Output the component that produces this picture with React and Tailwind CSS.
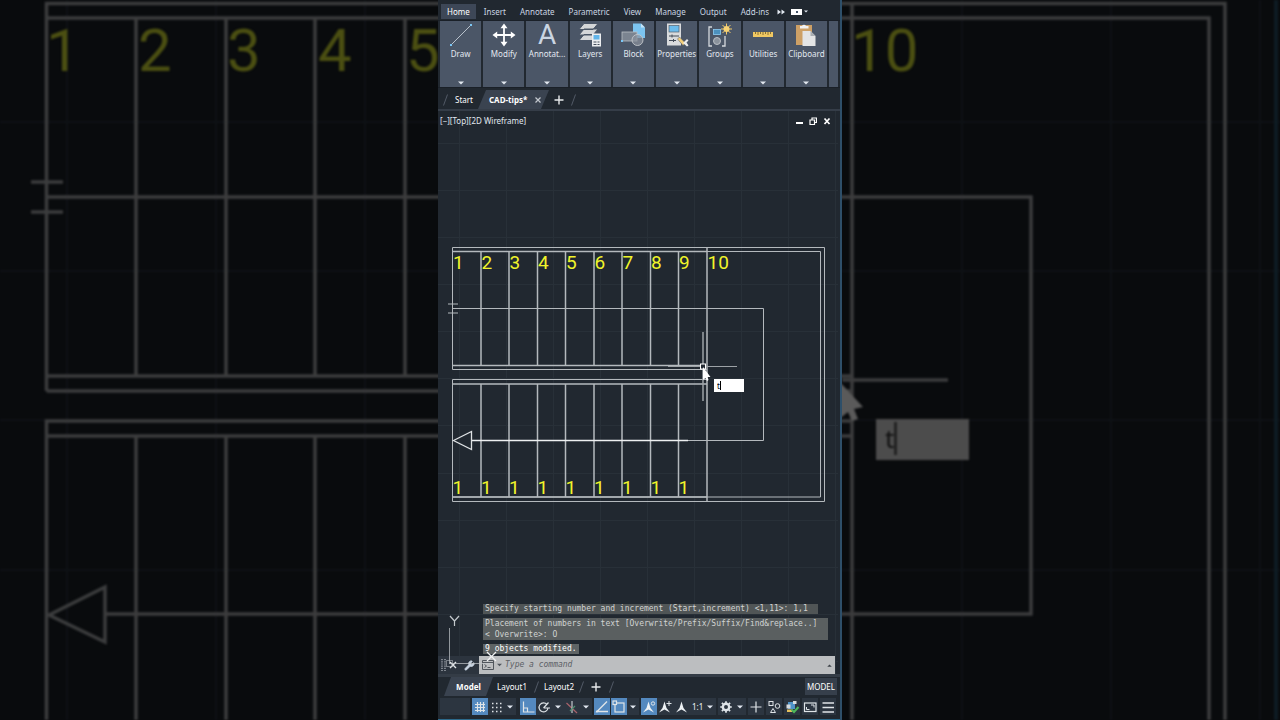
import { useState } from "react";
import { Wrench } from "lucide-react";

const menuTabs = ["Home", "Insert", "Annotate", "Parametric", "View", "Manage", "Output", "Add-ins"];
const steps = [1, 2, 3, 4, 5, 6, 7, 8, 9, 10];
const stepX = [452.5, 481, 509, 537.5, 565.5, 594, 622, 650.5, 678.5, 707];
const gridX = [459, 506, 553, 600, 647, 694, 741, 788, 835];
const gridY = [143, 190, 237, 284, 331, 378, 425, 473, 520, 567, 614, 661];

const Caret = () => (
  <svg viewBox="0 0 6 4" className="h-1 w-1.5 fill-slate-200">
    <path d="M0 0.5h6L3 3.5z" />
  </svg>
);

const DrawIcon = () => (
  <svg viewBox="0 0 24 24" className="h-6 w-6">
    <path d="M2 22 22 2" stroke="#b9c2cc" strokeWidth="1" />
    <rect x="1" y="21" width="2" height="2" fill="#7cc7f5" />
    <rect x="21" y="1" width="2" height="2" fill="#7cc7f5" />
  </svg>
);

const ModifyIcon = () => (
  <svg viewBox="0 0 24 24" className="h-6 w-6">
    <path d="M12 3v18M3 12h18" stroke="#fff" strokeWidth="1.8" />
    <path d="M12 0.5 15.5 5.2H8.500zM12 23.500 15.500 18.800H8.500zM0.500 12 5.200 8.500v7zM23.500 12 18.800 8.500v7z" fill="#fff" />
  </svg>
);

const AnnotateIcon = () => (
  <span className="flex h-6 w-6 items-center justify-center font-['Roboto',sans-serif] text-[28px] leading-6 text-slate-300">A</span>
);

const LayersIcon = () => (
  <svg viewBox="0 0 24 24" className="h-6 w-6">
    <path d="M6 0.5h14l-5 6H1zM6 6h14l-5 6H1zM6 11.500h14l-5 6H1z" fill="#d4d6d8" stroke="#4b5667" strokeWidth="1" />
    <rect x="14" y="10.500" width="9" height="13" fill="#eceef0" />
    <rect x="15.500" y="12" width="6" height="4.500" fill="#62b5ea" />
    <path d="M15.500 19h6M15.500 21.500h6" stroke="#46505e" strokeWidth="1" strokeDasharray="3 1" />
  </svg>
);

const BlockIcon = () => (
  <svg viewBox="0 0 24 24" className="h-6 w-6">
    <path d="M12 0.500h8l4 4V15H12z" fill="#7cc4f0" />
    <path d="M20 0.500v4h4z" fill="#c5e4f8" />
    <rect x="1" y="9" width="15" height="9" fill="#7b8490" stroke="#b9bec4" strokeWidth="0.800" />
    <circle cx="16.500" cy="17" r="5.500" fill="#8a929c" fillOpacity="0.700" stroke="#c2c6cb" strokeWidth="0.900" />
    <rect x="0" y="17" width="2" height="2" fill="#7cc7f5" />
  </svg>
);

const PropertiesIcon = () => (
  <svg viewBox="0 0 24 24" className="h-6 w-6">
    <rect x="2" y="0.500" width="14" height="22" fill="#d9dbdd" />
    <rect x="4" y="2.500" width="10" height="6.500" fill="#6cbcec" stroke="#55616f" strokeWidth="0.700" />
    <path d="M4 13h10M4 17.500h7M7 11.500v3M8.500 16v3" stroke="#434c59" strokeWidth="1" />
    <path d="m12.500 16 2-2 6 6-2.500 2.500z" fill="#f3cf7a" stroke="#4b5667" strokeWidth="0.500" />
    <path d="m18 20 4-4 1.500 1.500-2 2 2 3-1.500 1z" fill="#ececec" />
  </svg>
);

const GroupsIcon = () => (
  <svg viewBox="0 0 24 24" className="h-6 w-6" fill="none">
    <path d="M4 4H1v19h3M14 23h3V13" stroke="#d5d9dd" strokeWidth="1.300" />
    <rect x="5.500" y="6.500" width="7" height="5" fill="#4b90bd" stroke="#8ecdf2" strokeWidth="0.800" />
    <circle cx="9" cy="18" r="3.500" fill="#8a929c" stroke="#b9bec4" />
    <path d="M18.500 0.500v11M13 6h11M14.500 2l8 8M22.500 2l-8 8" stroke="#f3ca68" strokeWidth="1" />
    <circle cx="18.500" cy="6" r="3" fill="#f8d374" />
  </svg>
);

const UtilitiesIcon = () => (
  <svg viewBox="0 0 24 24" className="h-6 w-6">
    <rect x="2" y="9" width="20" height="5" fill="#f0c862" />
    <path d="M4.500 9v2M7 9v3M9.500 9v2M12 9v3M14.500 9v2M17 9v3M19.500 9v2" stroke="#6e5a2c" strokeWidth="0.800" />
  </svg>
);

const ClipboardIcon = () => (
  <svg viewBox="0 0 24 24" className="h-6 w-6">
    <rect x="2" y="2" width="16" height="20" fill="#cda066" />
    <path d="M6 3h2a2.200 2.200 0 0 1 4 0h2.500v2.500H6z" fill="#f2f2f2" />
    <path d="M8.500 8h8l5 5v10h-13z" fill="#e3e4e5" />
    <path d="M16.500 8v5h5z" fill="#a9adb2" />
  </svg>
);

const panels = [
  { label: "Draw", Icon: DrawIcon },
  { label: "Modify", Icon: ModifyIcon },
  { label: "Annotat...", Icon: AnnotateIcon },
  { label: "Layers", Icon: LayersIcon },
  { label: "Block", Icon: BlockIcon },
  { label: "Properties", Icon: PropertiesIcon },
  { label: "Groups", Icon: GroupsIcon },
  { label: "Utilities", Icon: UtilitiesIcon },
  { label: "Clipboard", Icon: ClipboardIcon },
];

// Enlarged, dimmed copy of the drawing that fills the window behind the editor
const Backdrop = () => (
  <svg
    viewBox="0 0 1280 720"
    preserveAspectRatio="xMidYMid slice"
    className="absolute inset-0 h-full w-full blur-[1px]"
    aria-hidden="true"
    fill="none"
  >
    <g stroke="#0f1216" strokeWidth="2">
      <path d="M67 0V720M216 0V720M365 0V720M962 0V720M1111 0V720M1260 0V720" />
      <path d="M0 122H1280M0 271H1280M0 420H1280M0 570H1280" />
    </g>
    <g stroke="#3c3d3e" strokeWidth="3.500">
      <path d="M46.500 391V3.500H1225V720M46.500 391H852M46.500 18H1209V720M46.500 376H852" />
      <path d="M46.500 720V421H852M46.500 436H852" />
      <path d="M136 18V376M226 18V376M315 18V376M405 18V376M136 436V720M226 436V720M315 436V720M405 436V720M852 4V720" />
      <path d="M46 197H1031V614H106" />
      <path d="M31 182H63M31 212H63M842 380H948" />
      <path d="M49 615 105 587V642Z" />
    </g>
    <g fill="#4b4f12" className="font-['Roboto',sans-serif] text-[60px]">
      <text x="46" y="71">1</text>
      <text x="138" y="71">2</text>
      <text x="227" y="71">3</text>
      <text x="318" y="71">4</text>
      <text x="406" y="71">5</text>
      <text x="851" y="71">10</text>
    </g>
    <path d="M838 380 863 407 854 409 858 419 852 421 848 412 838 420Z" fill="#5a5a5a" />
    <rect x="876" y="419" width="93" height="41" fill="#4c4c4c" />
    <text x="885" y="448" fill="#101010" className="font-['Noto_Sans',sans-serif] text-[26px]">t</text>
    <path d="M895.500 422V455" stroke="#101010" strokeWidth="2" />
    <path d="M1276 0V720" stroke="#0e1c24" strokeWidth="4" />
  </svg>
);

const StairPlan = () => (
  <svg viewBox="438 111 402 563" className="absolute inset-x-0 top-0 w-full" fill="none" role="img" aria-label="Stair plan">
    <g stroke="#283038">
      {gridX.map((x) => (
        <path key={x} d={`M${x + 0.5} 111V674`} />
      ))}
      {gridY.map((y) => (
        <path key={y} d={`M438 ${y + 0.5}H838`} />
      ))}
    </g>
    <g stroke="#b4b9bd">
      <path d="M452.500 369.500V247.500H824.500V501.500H452.500V379.500H707M452.500 369.500H707" />
      <path d="M452.500 251.500H820.500V497H452.500M452.500 308.500H763.500V440.500H688" />
      <path d="M448 304H458M448 313H458" />
      <path d="M707 247V502" strokeWidth="1.500" />
      <path d="M453 365.500H703M453 384H707M453 251.500H707M453 497H707" strokeWidth="1.500" />
      {stepX.slice(1, 9).map((x) => (
        <path key={x} d={`M${x} 252V365M${x} 384V497`} strokeWidth="1.500" />
      ))}
    </g>
    <path d="M471 440.500H688" stroke="#eef0f1" strokeWidth="1.400" />
    <path d="M453.500 440.500 471.500 431.500V449.500Z" stroke="#dfe2e4" strokeWidth="1.300" />
    <g fill="#f0f42a" className="font-['Roboto',sans-serif] text-[19px]">
      {steps.map((n, i) => (
        <text key={n} x={stepX[i] + 0.5} y="269">{n}</text>
      ))}
      {steps.slice(0, 9).map((n, i) => (
        <text key={n} x={stepX[i]} y="494">1</text>
      ))}
    </g>
    <g stroke="#9da2a6">
      <path d="M703 332V401" strokeWidth="1.500" />
      <path d="M668 366.500H737" />
    </g>
    <rect x="700.500" y="364" width="5" height="5" fill="#222931" stroke="#fff" />
    <path d="M703 367V380L705.500 378 707 381 708.500 380 707.500 377H710.500Z" fill="#fff" />
  </svg>
);

const Ucs = () => (
  <svg viewBox="0 0 60 60" className="pointer-events-none absolute bottom-0 left-0 h-[60px] w-[60px]" fill="none" stroke="#c3c8cc" aria-hidden="true">
    <path d="M12 2 16.500 7 21 2M16.500 7V12" strokeWidth="1.200" />
    <path d="M11.500 14V50M11.500 49.500H54" strokeOpacity="0.700" />
    <rect x="8.500" y="46.500" width="6" height="6" strokeOpacity="0.500" />
    <path d="M49 38 58 47M58 38 49 47" stroke="#f1f2f3" strokeWidth="1.300" />
  </svg>
);

const Slash = () => (
  <svg viewBox="0 0 5 12" className="h-3 w-[5px]" stroke="#525b67" aria-hidden="true">
    <path d="M4.500 0.500 0.500 11.500" />
  </svg>
);

const PlusIcon = () => (
  <svg viewBox="0 0 10 10" className="h-2.5 w-2.5" stroke="#e8eaec" strokeWidth="1.400">
    <path d="M5 0.500V9.500M0.500 5H9.500" />
  </svg>
);

const StatusButton = ({ label, active, children }) => (
  <button
    aria-label={label}
    aria-pressed={active}
    className={`flex h-[17px] w-4 items-center justify-center ${active ? "bg-[#5489bf]" : "bg-[#2c3540]"}`}
  >
    <svg viewBox="0 0 16 16" className="h-4 w-4" fill="none" stroke="#dfe4e8" strokeWidth="1.200">
      {children}
    </svg>
  </button>
);

const StatusCaret = ({ label }) => (
  <button aria-label={label} className="flex h-[17px] w-3 items-center justify-center bg-[#2c3540]">
    <Caret />
  </button>
);

const StatusBar = () => (
  <footer className="flex items-center gap-0.5 border-b border-[#2c6a8c] px-0.5 pb-1">
    <div className="h-[17px] w-[30px] bg-[#2c3540]" />
    <div className="flex">
      <StatusButton label="Grid" active>
        <path d="M5.500 3v10M8.500 3v10M11.500 3v10M3 5.500h10M3 8.500h10M3 11.500h10" />
      </StatusButton>
      <StatusButton label="Snap mode">
        <path d="M4 4.500h10M4 8.500h10M4 12.500h10" strokeDasharray="1.500 2.500" strokeWidth="1.500" />
      </StatusButton>
      <StatusCaret label="Snap options" />
    </div>
    <div className="ml-0.5 flex">
      <StatusButton label="Ortho mode" active>
        <path d="M3.500 2.500v10.500h11M3.500 9h4v4" />
      </StatusButton>
      <StatusButton label="Polar tracking">
        <path d="M11 5.500a4.500 4.500 0 1 0 1 3.500M7.500 9h6.500M7.500 9l5-5.500" />
      </StatusButton>
      <StatusCaret label="Polar options" />
      <StatusButton label="Isometric drafting">
        <path d="M2.500 4 13 14" stroke="#a8636b" />
        <path d="M8 2v12" stroke="#c4c9ce" />
        <path d="M11 7 6 12" stroke="#4c8f70" />
      </StatusButton>
      <StatusCaret label="Isometric options" />
    </div>
    <div className="flex">
      <StatusButton label="Object snap tracking" active>
        <path d="M13 2.500 3 12.500h11" strokeWidth="1.400" />
        <circle cx="3" cy="12.500" r="0.500" />
      </StatusButton>
      <div className="w-px" />
      <StatusButton label="Object snap" active>
        <rect x="4" y="4" width="9" height="9" />
        <rect x="2" y="2" width="3.500" height="3.500" fill="#5489bf" />
      </StatusButton>
      <StatusCaret label="Snap settings" />
    </div>
    <div className="flex">
      <StatusButton label="Annotation visibility" active>
        <path d="M7.500 2.500 9.500 9l3.500 4.500-5.500-3-5.500 3L5.500 9z" fill="#eef2f5" stroke="none" />
        <circle cx="12" cy="4.500" r="1.700" strokeWidth="1" />
      </StatusButton>
      <StatusButton label="Auto scale">
        <path d="M7.500 2.500 9.500 9l3.500 4.500-5.500-3-5.500 3L5.500 9z" fill="#eef2f5" stroke="none" />
        <path d="M12 2v5M9.500 4.500h5" strokeWidth="1" />
      </StatusButton>
      <StatusButton label="Annotation scale">
        <path d="M8.500 2.500 10.500 9l3.500 4.500-5.500-3-5.500 3L6.500 9z" fill="#eef2f5" stroke="none" />
      </StatusButton>
      <button className="flex h-[17px] items-center gap-1 bg-[#2c3540] px-[3px] text-[8px] text-slate-100">
        1:1
        <Caret />
      </button>
    </div>
    <div className="flex">
      <StatusButton label="Workspace">
        <circle cx="8" cy="8" r="3.200" strokeWidth="2.400" />
        <path d="M8 2.200v2.300M8 11.500v2.300M2.200 8h2.300M11.500 8h2.300M3.900 3.900l1.600 1.600M10.500 10.500l1.600 1.600M12.100 3.900l-1.600 1.600M5.500 10.500l-1.600 1.600" strokeWidth="1.700" />
      </StatusButton>
      <StatusCaret label="Workspace options" />
    </div>
    <StatusButton label="Annotation monitor">
      <path d="M8 2.500v11M2.500 8h11" />
    </StatusButton>
    <StatusButton label="Isolate objects">
      <rect x="3" y="2.500" width="4" height="4" strokeWidth="1" />
      <circle cx="11.500" cy="7" r="2.300" strokeWidth="1" />
      <path d="M4.500 13.500 7 9.500l2.500 4z" strokeWidth="1" />
    </StatusButton>
    <StatusButton label="Graphics performance">
      <path d="M4 3h7v7H4z" fill="#4f93c8" stroke="none" />
      <path d="M2.500 5.500h4v4h-4zM9 2h3.500v3H9z" fill="#d7dbde" stroke="none" />
      <path d="M3 10.500h5v2.500H3z" fill="#e4c15d" stroke="none" />
      <path d="M7.500 10.500 10 13l4.500-5" stroke="#4fb85a" strokeWidth="2" />
    </StatusButton>
    <StatusButton label="Clean screen">
      <rect x="2.500" y="4" width="11.500" height="8.500" />
      <path d="M9 6h3v2.500M7.500 10.500h-3V8" strokeWidth="1" />
    </StatusButton>
    <StatusButton label="Customization">
      <path d="M2.500 4h11.500M2.500 8.500h11.500M2.500 13h11.500" strokeWidth="1.500" />
    </StatusButton>
  </footer>
);

const App = () => {
  const [dynamicInput, setDynamicInput] = useState("t");
  const [command, setCommand] = useState("");

  return (
    <div className="relative min-h-screen overflow-hidden bg-[#090b0d] font-['Noto_Sans',sans-serif] text-[8px] leading-3 text-slate-200">
      <Backdrop />

      <main className="relative mx-auto flex min-h-screen w-full max-w-[404px] flex-col border-r-2 border-[#2e4f69] bg-[#212830]">
        {/* Menu */}
        <nav className="flex h-5 items-end gap-3.5 pb-px pl-[3px] text-slate-300">
          {menuTabs.map((tab) => (
            <button
              key={tab}
              className={tab === "Home" ? "-mr-1.5 h-[15px] bg-[#3d4757] px-1.5 text-white" : "h-[15px]"}
            >
              {tab}
            </button>
          ))}
          <button aria-label="More tabs" className="-ml-1.5 flex h-[15px] items-center gap-1.5">
            <svg viewBox="0 0 8 6" className="h-1.5 w-2 fill-slate-200">
              <path d="M0.500 0.500 4 3 0.500 5.500zM4.500 0.500 8 3 4.500 5.500z" />
            </svg>
            <span className="flex h-[6px] w-[11px] items-center justify-center bg-white">
              <span className="h-0.5 w-0.5 bg-slate-600" />
            </span>
            <svg viewBox="0 0 6 4" className="-ml-1 h-[3px] w-1 fill-slate-200">
              <path d="M0 0.500h6L3 3.500z" />
            </svg>
          </button>
        </nav>

        {/* Ribbon */}
        <section className="flex h-[68px] gap-0.5 border-y border-[#1a2028] px-0.5">
          {panels.map(({ label, Icon }) => (
            <button key={label} className="flex min-w-0 flex-1 flex-col items-center bg-[#4b5667] pt-0.5 pb-0.5 text-slate-200">
              <Icon />
              <span className="mt-px whitespace-nowrap">{label}</span>
              <span className="mt-auto">
                <Caret />
              </span>
            </button>
          ))}
          <div className="w-[9px] bg-[#4b5667]" />
        </section>

        {/* Open files */}
        <div className="flex h-[23px] items-center border-b-2 border-[#353d48] pt-0.5 pl-[5px]">
          <Slash />
          <button className="ml-[7px] text-white">Start</button>
          <div className="relative ml-[5px] flex h-full w-[71px] items-center justify-between pr-2 pl-[11px] font-bold text-white">
            <svg viewBox="0 0 71 20" preserveAspectRatio="none" className="absolute inset-0 h-full w-full fill-[#3a4350]">
              <path d="M8 0H71L63 20H0z" />
            </svg>
            <button className="relative">CAD-tips*</button>
            <button aria-label="Close CAD-tips" className="relative">
              <svg viewBox="0 0 6 6" className="h-1.5 w-1.5" stroke="#c3c8ce" strokeWidth="1.200">
                <path d="M0.500 0.500 5.500 5.500M5.500 0.500 0.500 5.500" />
              </svg>
            </button>
          </div>
          <button aria-label="New drawing" className="mr-[7px] ml-[5px]">
            <PlusIcon />
          </button>
          <Slash />
        </div>

        {/* Drawing area */}
        <section className="relative flex flex-1 flex-col overflow-hidden">
          <StairPlan />
          <div className="absolute top-[268px] left-[276px]">
            <input
              aria-label="Dynamic input"
              value={dynamicInput}
              onChange={(e) => setDynamicInput(e.target.value)}
              className="block h-[13px] w-[30px] bg-white pl-[3px] text-[8px] text-black outline-none"
            />
            <span className="absolute top-0.5 left-1.5 h-[9px] w-px bg-black" />
          </div>

          <div className="relative flex items-center justify-between pt-1 pr-[9px] pl-0.5">
            <button>[−][Top][2D Wireframe]</button>
            <div className="flex items-center gap-1.5">
              <button aria-label="Minimize">
                <svg viewBox="0 0 8 8" className="h-2 w-2" stroke="#fff" strokeWidth="2">
                  <path d="M1 6H8" />
                </svg>
              </button>
              <button aria-label="Restore">
                <svg viewBox="0 0 8 8" className="h-2 w-2" fill="none" stroke="#fff" strokeWidth="1.200">
                  <path d="M1 3h4.500v4.500H1zM3 3V1h4.500v4.500h-2" />
                </svg>
              </button>
              <button aria-label="Close">
                <svg viewBox="0 0 8 8" className="h-2 w-2" stroke="#fff" strokeWidth="1.700">
                  <path d="M1.500 1.500 6.500 7M6.500 1.500 1.500 7" />
                </svg>
              </button>
            </div>
          </div>

          <div className="relative mt-auto mb-0.5 ml-[45px] flex flex-col items-start gap-1 font-['DejaVu_Sans_Mono','Liberation_Mono',monospace] leading-[10px] text-[#d0d3d2]">
            <p className="w-[335px] bg-[#505556] px-0.5 whitespace-nowrap">
              Specify starting number and increment (Start,increment) &lt;1,11&gt;: 1,1
            </p>
            <p className="w-[345px] bg-[#5a5f60] px-0.5 leading-[11px] whitespace-nowrap">
              Placement of numbers in text [Overwrite/Prefix/Suffix/Find&amp;replace..]
              <br />
              &lt; Overwrite&gt;: O
            </p>
            <p className="bg-[#5f6465] px-0.5 text-white">9 objects modified.</p>
          </div>

          {/* Command line */}
          <div className="relative flex h-[18px] items-center pr-[5px]">
            <div className="flex h-full w-[41px] items-center bg-[#2c343e] pl-[3px]">
              <svg viewBox="0 0 5 12" className="h-3 w-[5px]" stroke="#b5bac0" strokeWidth="1.200" strokeDasharray="1.200 1">
                <path d="M1 0V12M4 0V12" />
              </svg>
              <button aria-label="Close command line" className="ml-[3px]">
                <svg viewBox="0 0 8 8" className="h-2 w-2" stroke="#e3e6e9" strokeWidth="1.400">
                  <path d="M1 1 7 7M7 1 1 7" />
                </svg>
              </button>
              <button aria-label="Customize" className="ml-[7px]">
                <Wrench className="h-[11px] w-[11px] fill-slate-300 text-slate-300" />
              </button>
            </div>
            <label className="flex h-full flex-1 items-center gap-[3px] bg-[#bcbec0] px-[3px]">
              <svg viewBox="0 0 12 10" className="h-2.5 w-3" fill="none" stroke="#50565d">
                <path d="M0.500 0.500h11v9H0.500zM0.500 2.500h11" />
                <path d="M2.500 4.500 4.500 6 2.500 7.500M5.500 7.500h3" />
              </svg>
              <svg viewBox="0 0 6 4" className="h-1 w-[5px] fill-[#50565d]">
                <path d="M0 0.500h6L3 3.500z" />
              </svg>
              <input
                aria-label="Command"
                value={command}
                onChange={(e) => setCommand(e.target.value)}
                placeholder="Type a command"
                className="min-w-0 flex-1 font-['DejaVu_Sans_Mono','Liberation_Mono',monospace] text-[8px] italic outline-none placeholder:text-[#5c6166]"
              />
              <svg viewBox="0 0 6 4" className="h-[3px] w-[5px] fill-[#3d4248]">
                <path d="M0 3.500h6L3 0.500z" />
              </svg>
            </label>
          </div>
          <Ucs />
        </section>

        {/* Layout tabs */}
        <div className="flex h-6 items-center border-t-[3px] border-[#343c46] pr-[3px] pb-0.5 pl-1.5 text-white">
          <button className="relative flex h-[19px] w-[49px] items-center justify-center font-bold">
            <svg viewBox="0 0 49 19" preserveAspectRatio="none" className="absolute inset-0 h-full w-full fill-[#3a4350]">
              <path d="M7 0H49L42 19H0z" />
            </svg>
            <span className="relative">Model</span>
          </button>
          <button className="mr-[7px] ml-1">Layout1</button>
          <Slash />
          <button className="mx-[5px]">Layout2</button>
          <Slash />
          <button aria-label="New layout" className="mr-2 ml-[7px]">
            <PlusIcon />
          </button>
          <Slash />
          <button className="ml-auto h-[17px] bg-[#363f4b] px-0.5">MODEL</button>
        </div>

        <StatusBar />
      </main>
    </div>
  );
};

export default App;
